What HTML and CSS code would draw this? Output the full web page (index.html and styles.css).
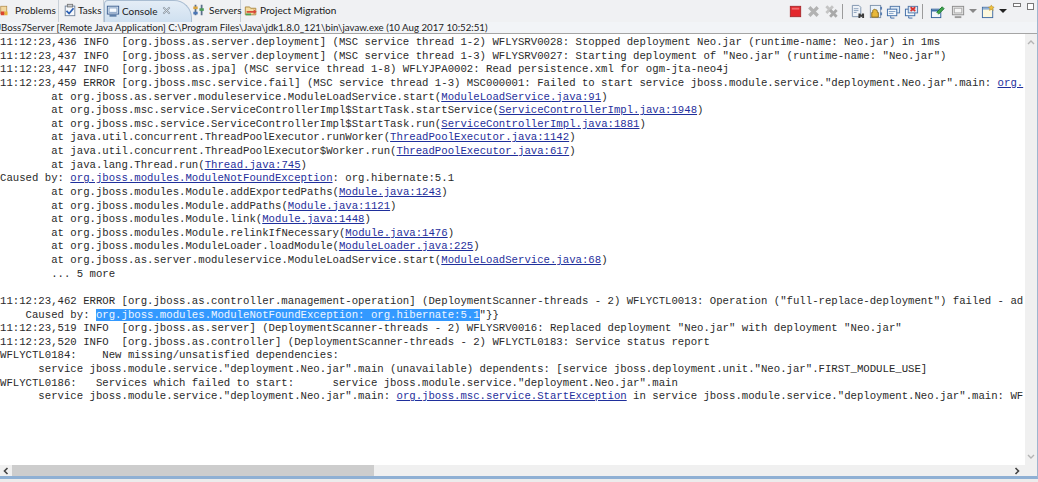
FILE: index.html
```html
<!DOCTYPE html>
<html lang="en">
<head>
<meta charset="utf-8">
<title>Console</title>
<link rel="stylesheet" href="styles.css">
</head>
<body>
<div class="view">
  <header class="tabbar">
    <div class="tab tab-problems">
      <svg class="ico ico-cut" viewBox="0 0 16 16"><rect x="1" y="3" width="8" height="10" fill="#f3d9a0" stroke="#b08a4a"/><rect x="1" y="10" width="5" height="5" fill="#d9432f"/><rect x="6" y="10" width="4" height="5" fill="#e8b53c"/></svg>
      <span>Problems</span>
    </div>
    <div class="tab tab-tasks">
      <svg class="ico" viewBox="0 0 16 16"><rect x="2.500" y="3.500" width="11" height="11" fill="#f6f8fb" stroke="#6c7f99"/><rect x="5" y="1.500" width="6" height="3" fill="#c9ccd1" stroke="#777"/><path d="M4 9l3 3 5-6" fill="none" stroke="#2b5fb3" stroke-width="2"/></svg>
      <span>Tasks</span>
    </div>
    <div class="tab tab-active">
      <svg class="ico" viewBox="0 0 16 16"><rect x="1.500" y="2.500" width="13" height="9" fill="#dce8f5" stroke="#33578a"/><rect x="3.500" y="4.500" width="9" height="5" fill="#f7fbff" stroke="#7f9cc0"/><rect x="4" y="12" width="8" height="2.500" fill="#5d7ea8"/></svg>
      <span>Console</span>
      <svg class="close" viewBox="0 0 10 10"><path d="M1.500 1.500l7 7M8.500 1.500l-7 7" fill="none" stroke="#8d98a4" stroke-width="2"/><path d="M2 2l6 6M8 2l-6 6" fill="none" stroke="#eef2f6" stroke-width=".7"/></svg>
    </div>
    <div class="tab tab-servers">
      <svg class="ico" viewBox="0 0 16 16"><rect x="3" y="2" width="2" height="12" fill="#5a6f8a"/><rect x="10" y="2" width="2" height="12" fill="#5a6f8a"/><rect x="1.500" y="4" width="5" height="3" fill="#d9a23c"/><rect x="8.500" y="6" width="5" height="3" fill="#4b9a57"/><rect x="1.500" y="10" width="5" height="3" fill="#4c76b5"/></svg>
      <span>Servers</span>
    </div>
    <div class="tab tab-migration">
      <svg class="ico" viewBox="0 0 16 16"><path d="M1.500 4.500h5l1 1.500h6v7.500h-12z" fill="#f2dca0" stroke="#a8843c"/><path d="M3 9h8v-2l3.500 3-3.500 3v-2h-8z" fill="#d84a3a"/><path d="M2 12h6v2h-6z" fill="#4ba35a"/></svg>
      <span>Project Migration</span>
    </div>
    <div class="toolbar">
      <svg class="tool" viewBox="0 0 16 16"><rect x="2.500" y="2.500" width="11" height="11" fill="#e3262c" stroke="#a82a2e"/><rect x="4" y="4" width="8" height="2" fill="#f26a6a"/></svg>
      <svg class="tool tool-gap" viewBox="0 0 16 16"><path d="M3.500 3.500l9 9M12.500 3.500l-9 9" fill="none" stroke="#b2b2b2" stroke-width="3.500"/></svg>
      <svg class="tool tool-gap" viewBox="0 0 16 16"><path d="M2.500 2.500l7 7M9.500 2.500l-7 7" fill="none" stroke="#c4c4c4" stroke-width="3"/><path d="M6.500 6.500l7 7M13.500 6.500l-7 7" fill="none" stroke="#a9a9a9" stroke-width="3"/></svg>
      <i class="sep"></i>
      <svg class="tool" viewBox="0 0 16 16"><path d="M2.500 1.500h7l2 2v10h-9z" fill="#eef2f7" stroke="#7e93ad"/><path d="M4 5h5M4 7h5M4 9h3" stroke="#8aa0bb"/><path d="M9 10h2l1 2 1-2h2v5h-2v-2l-1 1-1-1v2h-2z" fill="#3c3c3c"/></svg>
      <svg class="tool tool-tight" viewBox="0 0 16 16"><rect x="2.500" y="1.500" width="11" height="13" fill="#eaf1f8" stroke="#7e93ad"/><path d="M8 6a2 2 0 0 1 2 2v1h1v5H4V9h1V8a2 2 0 0 1 3-2z" fill="#e8b83a" stroke="#8a6a1c"/><rect x="13" y="3" width="2" height="3" fill="#5b7fb0"/><rect x="13" y="9" width="2" height="3" fill="#5b7fb0"/></svg>
      <svg class="tool tool-tight" viewBox="0 0 16 16"><rect x="4.500" y="2.500" width="10" height="7" fill="#dce9f6" stroke="#5278a8"/><rect x="1.500" y="5.500" width="10" height="7" fill="#f4f8fc" stroke="#3d6ba6"/><path d="M3 8h7M3 10h5" stroke="#7d9cc2"/><path d="M5 13v2h4" stroke="#3d6ba6" fill="none"/></svg>
      <svg class="tool tool-tight" viewBox="0 0 16 16"><rect x="1.500" y="5.500" width="10" height="7" fill="#f4f8fc" stroke="#3d6ba6"/><rect x="4.500" y="2.500" width="10" height="7" fill="#dce9f6" stroke="#5278a8"/><path d="M7 3.500l5 4M12 3.500l-5 4" stroke="#d9302c" stroke-width="1.800"/><path d="M5 13v2h4" stroke="#3d6ba6" fill="none"/></svg>
      <i class="sep sep-wide"></i>
      <svg class="tool" viewBox="0 0 16 16"><rect x="1.500" y="5.500" width="10" height="9" fill="#f2f6fb" stroke="#2d5f98"/><rect x="2" y="6" width="9" height="2" fill="#3d6fa8"/><path d="M7 9l6-6 2 2-6 6" fill="#3fa34d" stroke="#1f7a33"/></svg>
      <svg class="tool tool-wide" viewBox="0 0 16 16"><rect x="1.500" y="2.500" width="12" height="9" fill="#e6e6e6" stroke="#8c8c8c"/><rect x="3.500" y="4.500" width="8" height="5" fill="#f5f5f5" stroke="#ababab"/><rect x="4" y="13" width="7" height="2" fill="#9a9a9a"/></svg>
      <i class="caret caret-gray"></i>
      <svg class="tool tool-wide2" viewBox="0 0 16 16"><rect x="1.500" y="3.500" width="11" height="11" fill="#fdf8dd" stroke="#3f6ba2"/><rect x="2" y="4" width="10" height="2" fill="#8fb0d6"/><path d="M11 1l1 2 2 .3-1.500 1.500.5 2-2-1-2 1 .5-2L8 3.300l2-.3z" fill="#f2c23e" stroke="#b58a1d" stroke-width=".5"/></svg>
      <i class="caret"></i>
      <div class="winbtns">
        <i class="win-min"></i>
        <i class="win-max"></i>
      </div>
    </div>
  </header>
  <div class="subtitle">JBoss7Server [Remote Java Application] C:\Program Files\Java\jdk1.8.0_121\bin\javaw.exe (10 Aug 2017 10:52:51)</div>
  <main class="console">
    <div class="output-row">
<pre class="output">11:12:23,436 INFO  [org.jboss.as.server.deployment] (MSC service thread 1-2) WFLYSRV0028: Stopped deployment Neo.jar (runtime-name: Neo.jar) in 1ms
11:12:23,437 INFO  [org.jboss.as.server.deployment] (MSC service thread 1-3) WFLYSRV0027: Starting deployment of "Neo.jar" (runtime-name: "Neo.jar")
11:12:23,447 INFO  [org.jboss.as.jpa] (MSC service thread 1-8) WFLYJPA0002: Read persistence.xml for ogm-jta-neo4j
11:12:23,459 ERROR [org.jboss.msc.service.fail] (MSC service thread 1-3) MSC000001: Failed to start service jboss.module.service."deployment.Neo.jar".main: <a>org.</a>
	at org.jboss.as.server.moduleservice.ModuleLoadService.start(<a>ModuleLoadService.java:91</a>)
	at org.jboss.msc.service.ServiceControllerImpl$StartTask.startService(<a>ServiceControllerImpl.java:1948</a>)
	at org.jboss.msc.service.ServiceControllerImpl$StartTask.run(<a>ServiceControllerImpl.java:1881</a>)
	at java.util.concurrent.ThreadPoolExecutor.runWorker(<a>ThreadPoolExecutor.java:1142</a>)
	at java.util.concurrent.ThreadPoolExecutor$Worker.run(<a>ThreadPoolExecutor.java:617</a>)
	at java.lang.Thread.run(<a>Thread.java:745</a>)
Caused by: <a>org.jboss.modules.ModuleNotFoundException</a>: org.hibernate:5.1
	at org.jboss.modules.Module.addExportedPaths(<a>Module.java:1243</a>)
	at org.jboss.modules.Module.addPaths(<a>Module.java:1121</a>)
	at org.jboss.modules.Module.link(<a>Module.java:1448</a>)
	at org.jboss.modules.Module.relinkIfNecessary(<a>Module.java:1476</a>)
	at org.jboss.modules.ModuleLoader.loadModule(<a>ModuleLoader.java:225</a>)
	at org.jboss.as.server.moduleservice.ModuleLoadService.start(<a>ModuleLoadService.java:68</a>)
	... 5 more

11:12:23,462 ERROR [org.jboss.as.controller.management-operation] (DeploymentScanner-threads - 2) WFLYCTL0013: Operation ("full-replace-deployment") failed - ad
    Caused by: <mark>org.jboss.modules.ModuleNotFoundException: org.hibernate:5.1</mark>"}}
11:12:23,519 INFO  [org.jboss.as.server] (DeploymentScanner-threads - 2) WFLYSRV0016: Replaced deployment "Neo.jar" with deployment "Neo.jar"
11:12:23,520 INFO  [org.jboss.as.controller] (DeploymentScanner-threads - 2) WFLYCTL0183: Service status report
WFLYCTL0184:    New missing/unsatisfied dependencies:
      service jboss.module.service."deployment.Neo.jar".main (unavailable) dependents: [service jboss.deployment.unit."Neo.jar".FIRST_MODULE_USE]
WFLYCTL0186:   Services which failed to start:      service jboss.module.service."deployment.Neo.jar".main
      service jboss.module.service."deployment.Neo.jar".main: <a>org.jboss.msc.service.StartException</a> in service jboss.module.service."deployment.Neo.jar".main: WF</pre>
      <div class="vscroll">
        <svg class="v-arrow" viewBox="0 0 8 6"><path d="M1 5l3-3 3 3" fill="none" stroke="#b4b4b4" stroke-width="1.400"/></svg>
        <svg class="v-arrow" viewBox="0 0 8 6"><path d="M1 1l3 3 3-3" fill="none" stroke="#b4b4b4" stroke-width="1.400"/></svg>
      </div>
    </div>
    <div class="hscroll">
      <svg class="h-arrow" viewBox="0 0 6 8"><path d="M4.500 1l-3 3 3 3" fill="none" stroke="#444" stroke-width="1.600"/></svg>
      <div class="h-thumb"></div>
      <svg class="h-arrow h-arrow-end" viewBox="0 0 6 8"><path d="M1.500 1l3 3-3 3" fill="none" stroke="#444" stroke-width="1.600"/></svg>
    </div>
  </main>
</div>
</body>
</html>
```

FILE: styles.css
```css
* { box-sizing: border-box; }
html, body { margin: 0; padding: 0; }
body {
  width: 1038px;
  height: 482px;
  overflow: hidden;
  background: #ececec;
  font-family: "Lato", "Liberation Sans", sans-serif;
  color: #1a1a1a;
}
.view {
  display: flex;
  flex-direction: column;
  height: 479px;
  background: #fff;
  border-right: 1px solid #9fb6cf;
  border-bottom: 3px solid #8fb0d4;
}
.tabbar {
  display: flex;
  align-items: center;
  height: 22px;
  flex: none;
  background: #f0f1f3;
}
.tab {
  flex: none;
  display: flex;
  align-items: center;
  height: 22px;
  padding-bottom: 2px;
  font-size: 10px;
  white-space: nowrap;
  border-right: 1px solid #c8d0d8;
}
.ico { width: 14px; height: 14px; flex: none; }
.ico-cut { width: 12px; margin-right: 3px; }
.tab-problems { width: 59px; }
.tab-tasks { width: 45px; padding-left: 4px; gap: 1px; }
.tab-active {
  width: 88px;
  padding-left: 1px;
  gap: 2px;
  background: linear-gradient(#e4edf6, #cfe0f0);
  border: 1px solid #a9bdd2;
  border-bottom: 0;
  border-radius: 4px 18px 0 0;
}
.tab-servers { width: 49px; gap: 3px; }
.tab-migration { margin-left: 3px; gap: 2px; border-right: 0; }
.close { width: 9px; height: 9px; margin-left: 3px; }
.toolbar {
  margin-left: auto;
  display: flex;
  align-items: center;
  padding-right: 3px;
  height: 22px;
}
.tool { width: 15px; height: 15px; flex: none; }
.tool-gap { margin-left: 3px; }
.tool-tight { margin-left: 3px; }
.tool-wide { margin-left: 6px; }
.tool-wide2 { margin-left: 4px; }
.sep { flex: none; width: 1px; height: 15px; background: #9b9b9b; margin: 0 7px 0 3px; }
.sep-wide { margin: 0 7px 0 3px; }
.caret {
  flex: none;
  width: 0;
  height: 0;
  margin-left: 3px;
  border: 4px solid transparent;
  border-top: 4px solid #222;
  border-bottom: 0;
}
.caret-gray { border-top-color: #888; }
.winbtns {
  flex: none;
  display: flex;
  gap: 6px;
  margin-left: 6px;
  align-self: flex-start;
  padding-top: 3px;
}
.win-min { display: block; width: 8px; height: 4px; border: 1px solid #777; background: #fff; }
.win-max { display: block; width: 7px; height: 7px; border: 1px solid #777; background: #fff; }
.subtitle {
  flex: none;
  height: 12px;
  font-size: 9.7px;
  line-height: 10px;
  white-space: pre;
  overflow: hidden;
  background: #f2f4f7;
  text-indent: -3px;
  border-bottom: 1px solid #a5a5a5;
}
.console {
  flex: 1;
  min-height: 0;
  display: flex;
  flex-direction: column;
}
.output-row { flex: 1; min-height: 0; display: flex; }
.output {
  flex: 1;
  min-width: 0;
  margin: 0;
  padding-top: 2px;
  overflow: hidden;
  font-family: "Liberation Mono", monospace;
  font-size: 10.67px;
  line-height: 13.63px;
  tab-size: 8;
  color: #2a2a2a;
}
.output a { color: #1f2f9c; text-decoration: underline; }
.output mark { background: #3399ff; color: #eef6ff; }
.vscroll {
  flex: none;
  width: 12px;
  padding: 5px 0 5px;
  background: #f0f0f0;
  display: flex;
  flex-direction: column;
  justify-content: space-between;
  align-items: center;
}
.v-arrow { width: 8px; height: 6px; }
.hscroll {
  flex: none;
  height: 11px;
  display: flex;
  align-items: center;
  background: #f0f0f0;
}
.h-arrow { flex: none; width: 6px; height: 8px; margin: 0 3px; }
.h-thumb { flex: none; width: 362px; height: 11px; background: #cdcdcd; }
.h-arrow-end { margin: 0 17px 0 auto; }
```
